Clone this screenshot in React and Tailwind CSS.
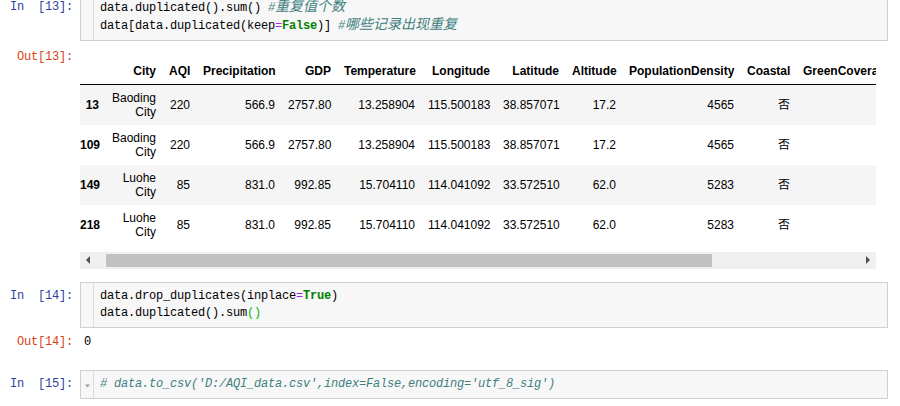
import React from 'react';

// Jupyter notebook: duplicate check on the AQI dataframe
const mono = "font-['Liberation_Mono','Noto_Sans_CJK_SC',monospace] text-[12px] tracking-[-0.2px]";
const sans = "font-['Liberation_Sans','Noto_Sans_CJK_SC',sans-serif] text-[12px]";

const Cm = ({ children }) => <span className="italic text-[#408080]">{children}</span>;
const Cjk = ({ children }) => <span className="text-[14px] tracking-normal">{children}</span>;
const Op = ({ children }) => <span className="text-[#aa22ff]">{children}</span>;
const Kw = ({ children }) => <span className="font-bold text-[#008000]">{children}</span>;

function InputCell({ n, className, marker, children }) {
  return (
    <div className={`flex ${className}`}>
      <div className={`${mono} w-[80px] shrink-0 pr-[7px] pt-[6px] text-right leading-[17px] text-[#303f9f]`}>
        In&nbsp;&nbsp;[{n}]:
      </div>
      <div className="flex w-[808px] border border-[#cfcfcf] bg-[#f7f7f7]">
        <div className="flex w-[13px] shrink-0 justify-center border-r border-[#dddddd] pt-[13px]">
          {marker && (
            <svg width="5" height="4" viewBox="0 0 5 4">
              <path d="M0 0.5 L5 0.5 L2.5 3.5 Z" fill="#9e9e9e" />
            </svg>
          )}
        </div>
        <div className={`${mono} py-[5px] pl-[6px] leading-[17px] text-black`}>{children}</div>
      </div>
    </div>
  );
}

function OutPrompt({ n }) {
  return (
    <div className={`${mono} w-[80px] shrink-0 pr-[7px] text-right leading-[17px] text-[#d84315]`}>
      Out[{n}]:
    </div>
  );
}

const rows = [
  ['13', 'Baoding City', '220', '566.9', '2757.80', '13.258904', '115.500183', '38.857071', '17.2', '4565', '否', '37.3'],
  ['109', 'Baoding City', '220', '566.9', '2757.80', '13.258904', '115.500183', '38.857071', '17.2', '4565', '否', '37.3'],
  ['149', 'Luohe City', '85', '831.0', '992.85', '15.704110', '114.041092', '33.572510', '62.0', '5283', '否', '41.2'],
  ['218', 'Luohe City', '85', '831.0', '992.85', '15.704110', '114.041092', '33.572510', '62.0', '5283', '否', '41.2'],
];

const headers = ['City', 'AQI', 'Precipitation', 'GDP', 'Temperature', 'Longitude', 'Latitude', 'Altitude', 'PopulationDensity', 'Coastal'];

function Frame() {
  return (
    <div className="w-[796px] overflow-hidden">
      <table className={`${sans} w-[857px] table-fixed border-collapse text-black`}>
        <colgroup>
          <col className="w-[26px]" />
          <col className="w-[57px]" />
          <col className="w-[34px]" />
          <col className="w-[85px]" />
          <col className="w-[56px]" />
          <col className="w-[84px]" />
          <col className="w-[75px]" />
          <col className="w-[69px]" />
          <col className="w-[57px]" />
          <col className="w-[118px]" />
          <col className="w-[56px]" />
          <col className="w-[140px]" />
        </colgroup>
        <thead>
          <tr className="h-[26px] border-b border-black">
            <th className="p-0" />
            {headers.map((h) => (
              <th key={h} className="whitespace-nowrap pl-[6px] pr-[7px] text-right align-middle font-bold leading-[14px]">
                {h}
              </th>
            ))}
            <th className="whitespace-nowrap pl-[6px] text-left align-middle font-bold leading-[14px]">GreenCoverageRate</th>
          </tr>
        </thead>
        <tbody>
          {rows.map((r, i) => (
            <tr key={r[0]} className={`h-[40px] ${i % 2 === 0 ? 'bg-[#f5f5f5]' : 'bg-white'}`}>
              <th className="pr-[7px] text-right align-middle font-bold leading-[14px]">{r[0]}</th>
              {r.slice(1).map((v, j) => (
                <td key={j} className="py-[6px] pl-[6px] pr-[7px] text-right align-middle leading-[14px]">
                  {v}
                </td>
              ))}
            </tr>
          ))}
        </tbody>
      </table>
    </div>
  );
}

function Scrollbar() {
  return (
    <div className="mt-[7px] flex h-[17px] w-[796px] items-center bg-[#f0f0f0]">
      <div className="flex w-[26px] shrink-0 pl-[6px]">
        <div className="h-0 w-0 border-y-[4px] border-r-[4px] border-y-transparent border-r-[#505050]" />
      </div>
      <div className="h-[13px] w-[606px] shrink-0 bg-[#c1c1c1]" />
      <div className="flex-1" />
      <div className="flex w-[17px] shrink-0 pl-[7px]">
        <div className="h-0 w-0 border-y-[4px] border-l-[4px] border-y-transparent border-l-[#505050]" />
      </div>
    </div>
  );
}

export default function App() {
  return (
    <div className="h-[406px] w-[900px] overflow-hidden bg-white">
      <InputCell n="13" className="mt-[-7px]">
        <div>
          data.duplicated().sum() <Cm>#<Cjk>重复值个数</Cjk></Cm>
        </div>
        <div>
          data[data.duplicated(keep<Op>=</Op><Kw>False</Kw>)] <Cm>#<Cjk>哪些记录出现重复</Cjk></Cm>
        </div>
      </InputCell>

      <div className="mt-[8px] flex">
        <OutPrompt n="13" />
        <div className="pt-[9px]">
          <Frame />
          <Scrollbar />
        </div>
      </div>

      <InputCell n="14" className="mt-[13px]">
        <div>
          data.drop_duplicates(inplace<Op>=</Op><Kw>True</Kw>)
        </div>
        <div>
          data.duplicated().sum<span className="text-[#00bb00]">()</span>
        </div>
      </InputCell>

      <div className="mt-[6px] flex">
        <OutPrompt n="14" />
        <div className={`${mono} pl-[4px] leading-[17px] text-black`}>0</div>
      </div>

      <InputCell n="15" className="mt-[19px]" marker>
        <div>
          <Cm># data.to_csv('D:/AQI_data.csv',index=False,encoding='utf_8_sig')</Cm>
        </div>
      </InputCell>
    </div>
  );
}
